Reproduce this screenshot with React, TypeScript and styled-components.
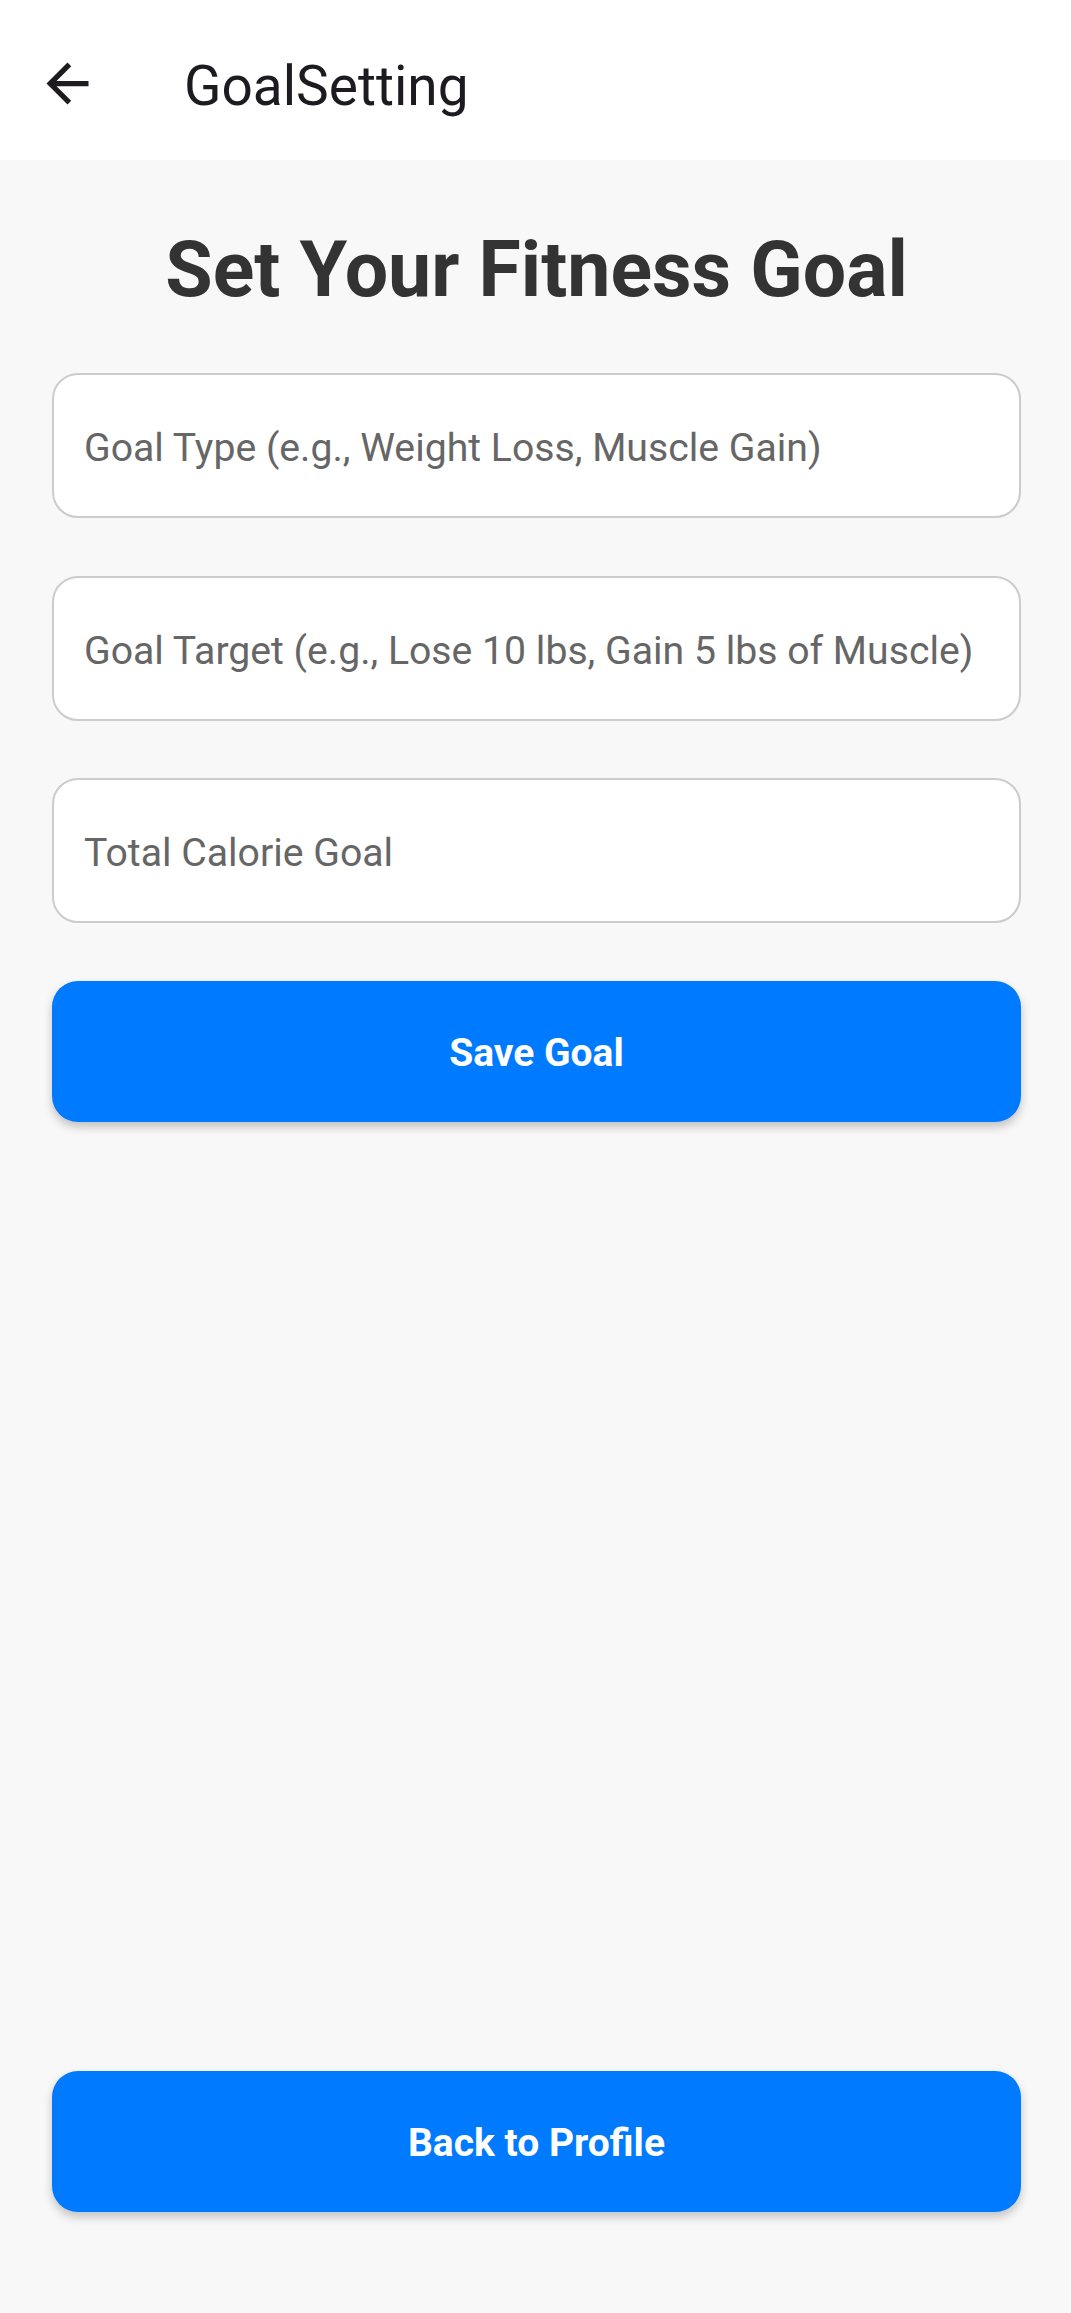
import React from "react";
import styled, { createGlobalStyle } from "styled-components";

const GlobalStyle = createGlobalStyle`
  * { box-sizing: border-box; }
  html, body {
    margin: 0;
    padding: 0;
    background: #f8f8f8;
    font-family: Roboto, "Noto Sans", Arial, sans-serif;
  }
`;

const Screen = styled.div`
  display: flex;
  flex-direction: column;
  min-height: 100vh;
  background: #f8f8f8;
`;

const TopBar = styled.header`
  display: flex;
  align-items: flex-start;
  height: 160px;
  background: #ffffff;
  padding-left: 36px;
  flex-shrink: 0;
`;

const BackButton = styled.button`
  display: flex;
  align-items: center;
  justify-content: center;
  width: 63px;
  height: 63px;
  margin-top: 52px;
  padding: 0;
  border: none;
  background: transparent;
  color: #1d1b20;
  cursor: pointer;
`;

const TopTitle = styled.h1`
  margin: 54px 0 0 85px;
  font-size: 55px;
  font-weight: 400;
  line-height: normal;
  color: #1d1b20;
`;

const Body = styled.main`
  display: flex;
  flex-direction: column;
  flex: 1;
  padding: 65px 50px 101px 52px;
`;

const Heading = styled.h2`
  margin: 0 0 58px;
  text-align: center;
  font-size: 77px;
  font-weight: 700;
  line-height: normal;
  color: #333333;
`;

const Form = styled.div`
  display: flex;
  flex-direction: column;
  gap: 57.5px;
`;

const Field = styled.input`
  height: 145px;
  width: 100%;
  padding: 5px 30px 0;
  border: 2px solid #cccccc;
  border-radius: 26px;
  background: #ffffff;
  font-family: Roboto, "Noto Sans", Arial, sans-serif;
  font-size: 39.2px;
  color: #333333;
  outline: none;

  &::placeholder {
    color: #666666;
    opacity: 1;
  }
`;

const ActionButton = styled.button<{ $bottom?: boolean }>`
  height: 141px;
  width: 100%;
  margin-top: ${(p) => (p.$bottom ? "auto" : "0")};
  padding: 3px 0 0;
  border: none;
  border-radius: 26px;
  background: #007aff;
  color: #ffffff;
  font-family: Roboto, "Noto Sans", Arial, sans-serif;
  font-size: 39px;
  font-weight: 700;
  box-shadow: 0 5px 10px rgba(0, 0, 0, 0.22);
  cursor: pointer;
`;

export default function App() {
  return (
    <>
      <GlobalStyle />
      <Screen>
        <TopBar>
          <BackButton aria-label="Back">
            <svg width="63" height="63" viewBox="0 0 24 24" fill="currentColor">
              <path d="M20 11H7.83l5.59-5.59L12 4l-8 8 8 8 1.41-1.41L7.83 13H20v-2z" />
            </svg>
          </BackButton>
          <TopTitle>GoalSetting</TopTitle>
        </TopBar>
        <Body>
          <Heading>Set Your Fitness Goal</Heading>
          <Form>
            <Field placeholder="Goal Type (e.g., Weight Loss, Muscle Gain)" />
            <Field placeholder="Goal Target (e.g., Lose 10 lbs, Gain 5 lbs of Muscle)" />
            <Field placeholder="Total Calorie Goal" />
            <ActionButton>Save Goal</ActionButton>
          </Form>
          <ActionButton $bottom>Back to Profile</ActionButton>
        </Body>
      </Screen>
    </>
  );
}
